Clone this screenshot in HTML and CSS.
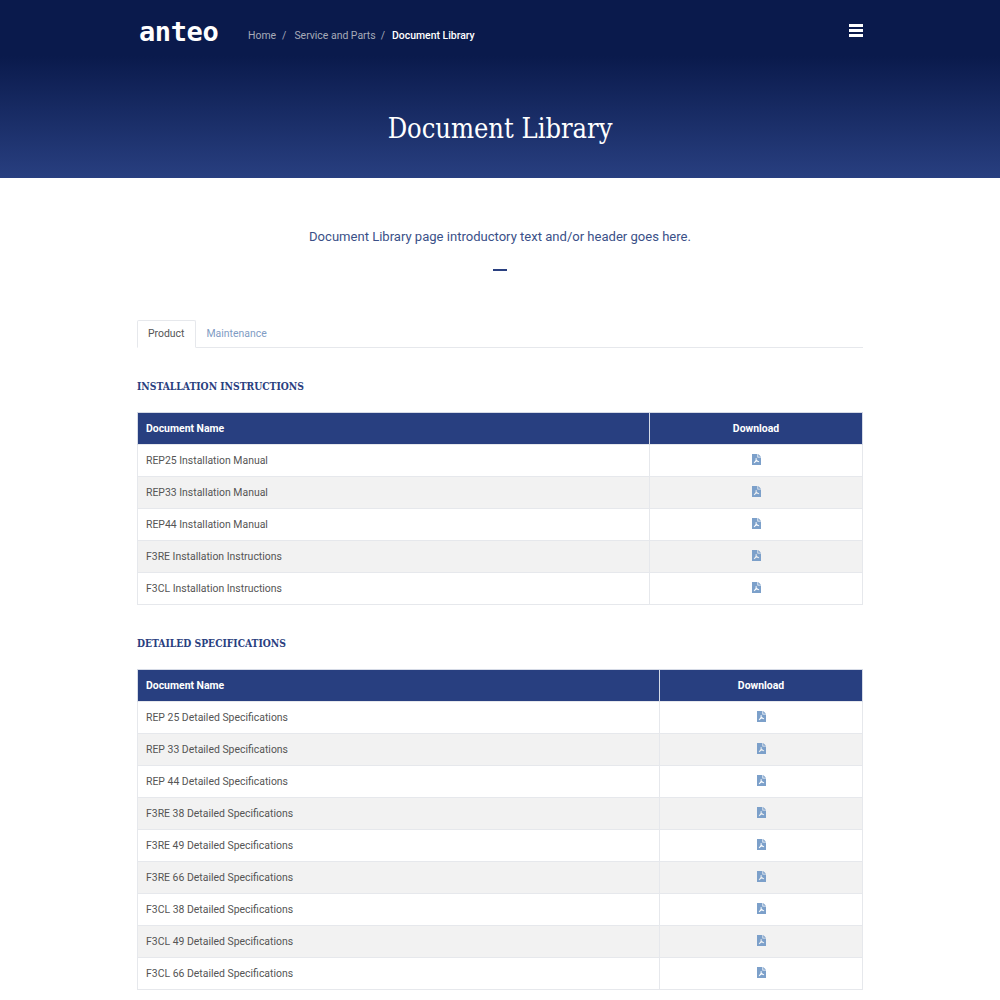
FILE: index.html
```html
<!DOCTYPE html>
<html lang="en">
<head>
<meta charset="utf-8">
<title>Document Library</title>
<link rel="stylesheet" href="styles.css">
</head>
<body>
<svg class="sprite" width="0" height="0" aria-hidden="true">
  <symbol id="pdf" viewBox="0 0 9 11">
    <path fill="#7ca0ca" fill-rule="evenodd" d="M0 0H5.4V3.4H9V11H0ZM6.2 0 9 2.7H6.2ZM3.7 4 4.5 4 4.7 6 7.2 7.4 7 8.2 4.5 7.6 2.2 9.3 1.7 8.7 3.6 6.2Z"/>
  </symbol>
</svg>
<header class="hero">
  <div class="topbar">
    <div class="brand-nav">
      <span class="logo">anteo</span>
      <nav class="crumbs">
        <span>Home</span><i>/</i><span>Service and Parts</span><i class="last">/</i><b>Document Library</b>
      </nav>
    </div>
    <div class="burger"><span></span><span></span><span></span></div>
  </div>
  <h1>Document Library</h1>
</header>
<main class="wrap">
  <p class="intro">Document Library page introductory text and/or header goes here.</p>
  <div class="rule"></div>
  <div class="tabs"><a class="tab active">Product</a><a class="tab">Maintenance</a></div>

  <h2>INSTALLATION INSTRUCTIONS</h2>
  <table class="docs first">
    <thead><tr><th>Document Name</th><th>Download</th></tr></thead>
    <tbody>
      <tr><td>REP25 Installation Manual</td><td><svg class="ico"><use href="#pdf"/></svg></td></tr>
      <tr><td>REP33 Installation Manual</td><td><svg class="ico"><use href="#pdf"/></svg></td></tr>
      <tr><td>REP44 Installation Manual</td><td><svg class="ico"><use href="#pdf"/></svg></td></tr>
      <tr><td>F3RE Installation Instructions</td><td><svg class="ico"><use href="#pdf"/></svg></td></tr>
      <tr><td>F3CL Installation Instructions</td><td><svg class="ico"><use href="#pdf"/></svg></td></tr>
    </tbody>
  </table>

  <h2>DETAILED SPECIFICATIONS</h2>
  <table class="docs second">
    <thead><tr><th>Document Name</th><th>Download</th></tr></thead>
    <tbody>
      <tr><td>REP 25 Detailed Specifications</td><td><svg class="ico"><use href="#pdf"/></svg></td></tr>
      <tr><td>REP 33 Detailed Specifications</td><td><svg class="ico"><use href="#pdf"/></svg></td></tr>
      <tr><td>REP 44 Detailed Specifications</td><td><svg class="ico"><use href="#pdf"/></svg></td></tr>
      <tr><td>F3RE 38 Detailed Specifications</td><td><svg class="ico"><use href="#pdf"/></svg></td></tr>
      <tr><td>F3RE 49 Detailed Specifications</td><td><svg class="ico"><use href="#pdf"/></svg></td></tr>
      <tr><td>F3RE 66 Detailed Specifications</td><td><svg class="ico"><use href="#pdf"/></svg></td></tr>
      <tr><td>F3CL 38 Detailed Specifications</td><td><svg class="ico"><use href="#pdf"/></svg></td></tr>
      <tr><td>F3CL 49 Detailed Specifications</td><td><svg class="ico"><use href="#pdf"/></svg></td></tr>
      <tr><td>F3CL 66 Detailed Specifications</td><td><svg class="ico"><use href="#pdf"/></svg></td></tr>
    </tbody>
  </table>
</main>
</body>
</html>
```
FILE: styles.css
```css
* { box-sizing: border-box; }
html, body { margin: 0; height: 1000px; overflow: hidden; }
body { font-family: Roboto, "Liberation Sans", sans-serif; background: #fff; color: #555; }
.sprite { position: absolute; }

.hero {
  height: 178px;
  background: linear-gradient(180deg, #0a1a4c 0, #0a1a4c 56px, #283f80 100%);
  padding: 0 137px;
  display: flex;
  flex-direction: column;
}
.topbar { display: flex; justify-content: space-between; align-items: flex-start; height: 96px; }
.brand-nav { display: flex; align-items: center; padding-top: 19px; }
.logo {
  font-family: "DejaVu Sans Mono", monospace;
  font-weight: 700;
  font-size: 27px;
  line-height: 26px;
  color: #fff;
  width: 111px;
  padding-left: 2px;
  letter-spacing: -0.4px;
}
.crumbs { font-size: 10.45px; color: #a6aab8; display: flex; align-items: center; padding-top: 6px; }
.crumbs i { font-style: normal; margin: 0 8px 0 6px; }
.crumbs i.last { margin: 0 7px 0 5px; }
.crumbs b { font-weight: 500; color: #fff; }
.burger { display: flex; flex-direction: column; gap: 2px; padding-top: 24px; }
.burger span { width: 14px; height: 3px; background: #fff; }
h1 {
  margin: 0;
  font-family: "DejaVu Serif Condensed", "DejaVu Serif", serif;
  font-weight: 400;
  font-size: 27px;
  line-height: 66px;
  text-align: center;
  color: #fff;
}

.wrap { width: 726px; margin: 0 auto; }
.intro { margin: 0; padding-top: 50px; font-size: 13.05px; line-height: 18px; text-align: center; color: #3a5088; }
.rule { width: 14px; height: 2px; margin: 23px auto 0; background: #2a4080; }

.tabs { display: flex; margin-top: 49px; border-bottom: 1px solid #e6e8ec; height: 28px; }
.tab { padding: 0 10px; font-size: 10.45px; line-height: 26px; color: #7f9cc4; height: 28px; border: 1px solid transparent; }
.tab.active { color: #555; background: #fff; border-color: #e6e8ec; border-bottom-color: #fff; border-radius: 2px 2px 0 0; }

h2 {
  margin: 30px 0 18px;
  font-family: "DejaVu Serif Condensed", "DejaVu Serif", serif;
  font-weight: 700;
  font-size: 10.25px;
  line-height: 16px;
  color: #2a4080;
}

.docs { width: 100%; border-collapse: collapse; table-layout: fixed; font-size: 10.45px; }
.first th:first-child { width: 512px; }
.second th:first-child { width: 522px; }
.docs th {
  height: 32px;
  padding: 0 8px;
  background: #283f80;
  color: #fff;
  font-weight: 700;
  border: 1px solid #d5dae6;
  border-bottom: 0;
  text-align: center;
}
.docs th:first-child { text-align: left; }
.docs td {
  height: 32px;
  padding: 0 8px;
  border: 1px solid #e6e8ec;
  text-align: center;
  color: #555;
}
.docs td:first-child { text-align: left; }
.docs tbody tr:nth-child(even) td { background: #f2f2f2; }
.ico { display: block; width: 9px; height: 11px; margin: -3px auto 0; }
```
